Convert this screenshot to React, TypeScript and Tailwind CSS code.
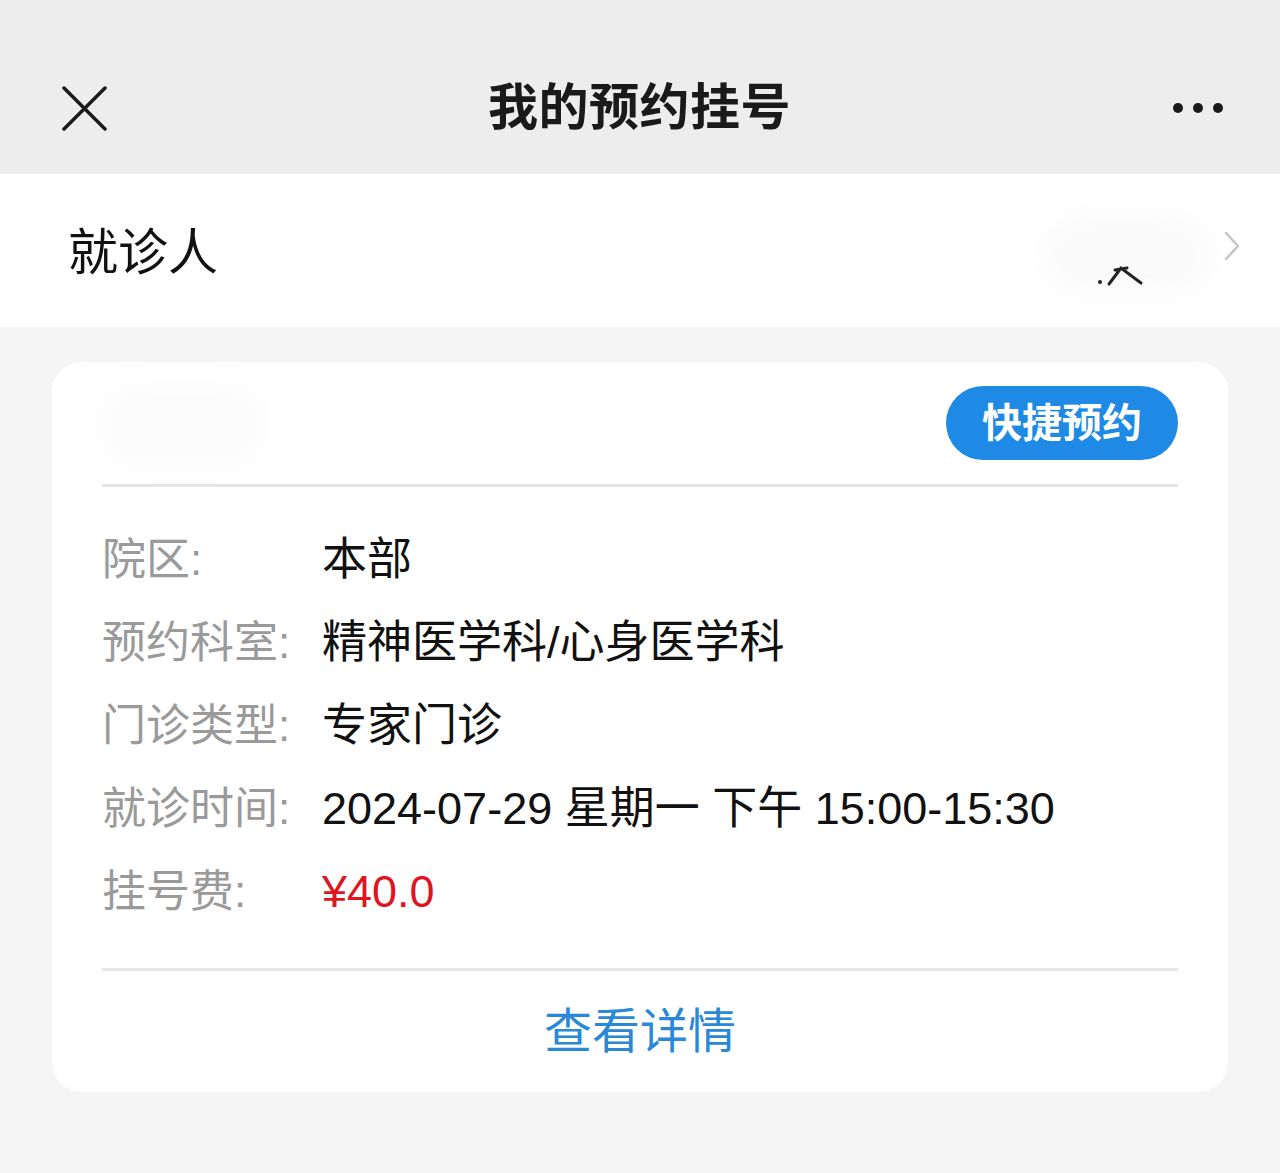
const font = "font-['Liberation_Sans','Noto_Sans_CJK_SC',sans-serif]";

const rows: { label: string; value: string; red?: boolean }[] = [
  { label: "院区:", value: "本部" },
  { label: "预约科室:", value: "精神医学科/心身医学科" },
  { label: "门诊类型:", value: "专家门诊" },
  { label: "就诊时间:", value: "2024-07-29 星期一 下午 15:00-15:30" },
  { label: "挂号费:", value: "¥40.0", red: true },
];

export default function App() {
  return (
    <div className={`min-h-[1173px] w-[1280px] bg-[#f5f5f5] ${font}`}>
      {/* top bar */}
      <header className="flex h-[174px] items-center justify-between bg-[#ededed] px-[62px] pt-[42px]">
        <svg width="45" height="45" viewBox="0 0 45 45" className="text-[#1a1a1a]">
          <path d="M2 2 L43 43 M43 2 L2 43" stroke="currentColor" strokeWidth="3.5" strokeLinecap="round" />
        </svg>
        <h1 className="text-[50px] font-semibold tracking-[0.5px] text-[#1a1a1a]">我的预约挂号</h1>
        <svg width="52" height="12" viewBox="0 0 52 12" className="-mr-[6px] text-[#1a1a1a]">
          <circle cx="6" cy="6" r="5" fill="currentColor" />
          <circle cx="26" cy="6" r="5" fill="currentColor" />
          <circle cx="46" cy="6" r="5" fill="currentColor" />
        </svg>
      </header>

      {/* patient row */}
      <div className="flex h-[153px] items-center justify-between bg-white pl-[68px] pr-[40px] pt-[6px]">
        <span className="text-[50px] text-[#111]">就诊人</span>
        <div className="flex items-center gap-[12px]">
          <div className="relative h-[80px] w-[170px]">
            <div className="absolute inset-0 rounded-[40px] bg-[#fafafa] blur-md" />
            <svg width="60" height="30" viewBox="0 0 60 30" className="absolute left-[55px] top-[44px] blur-[0.6px]">
              <circle cx="3" cy="24" r="2" fill="#222" />
              <path d="M12 26 L24 10 L44 25 M18 12 L30 10" stroke="#222" strokeWidth="3" fill="none" strokeLinecap="round" />
            </svg>
          </div>
          <svg width="16" height="30" viewBox="0 0 16 30" className="-mt-[16px]">
            <path d="M2 2 L14 15 L2 28" stroke="#c4c4c4" strokeWidth="2.5" fill="none" strokeLinecap="round" strokeLinejoin="round" />
          </svg>
        </div>
      </div>

      {/* appointment card */}
      <div className="px-[52px] pt-[35px]">
        <div className="rounded-[30px] bg-white">
          <div className="px-[50px]">
            <div className="flex items-start justify-between pt-[24px]">
              <div className="h-[80px] w-[160px] rounded-[30px] bg-[#fbfbfb] blur-md" />
              <button className="flex h-[74px] w-[232px] items-center justify-center rounded-full bg-[#1e8ae6] text-[40px] font-semibold text-white">
                快捷预约
              </button>
            </div>
            <div className="mt-[18px] h-[3px] bg-[#e6e6e6]" />
            <div className="flex flex-col pb-[35px] pt-[31px]">
              {rows.map((r) => (
                <div key={r.label} className="flex h-[83px] items-center">
                  <span className="w-[220px] shrink-0 text-[44px] text-[#9a9a9a]">{r.label}</span>
                  <span className={`text-[45px] ${r.red ? "text-[#e0141e]" : "text-[#111]"}`}>{r.value}</span>
                </div>
              ))}
            </div>
            <div className="h-[3px] bg-[#e6e6e6]" />
          </div>
          <div className="flex h-[121px] items-center justify-center">
            <span className="text-[48px] text-[#2a88d8]">查看详情</span>
          </div>
        </div>
      </div>
    </div>
  );
}
